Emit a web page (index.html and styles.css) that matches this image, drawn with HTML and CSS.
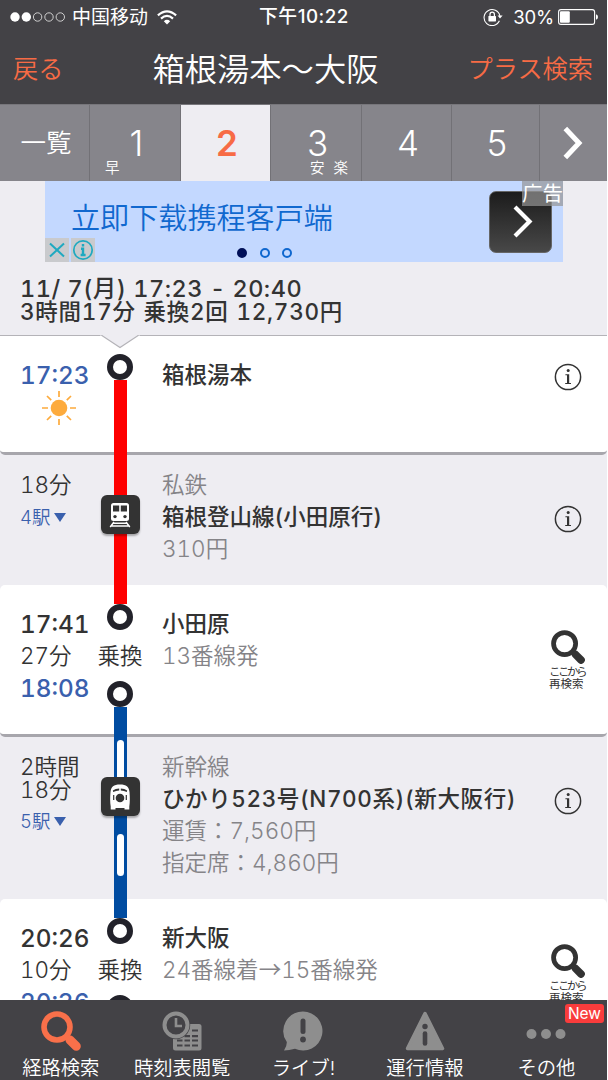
FILE: index.html
```
<!DOCTYPE html>
<html lang="ja">
<head>
    <meta charset="UTF-8">
    <meta name="viewport" content="width=device-width, initial-scale=1.0">
    <title>箱根湯本〜大阪</title>
    <link rel="stylesheet" href="styles.css">
</head>
<body>
    <!-- shared icons -->
    <svg class="defs" width="0" height="0">
        <symbol id="icon-search" viewBox="0 0 40 40">
            <circle cx="16" cy="16" r="13" fill="none" stroke="currentColor" stroke-width="5.6"/>
            <path d="M24.5 24.5L29 29" stroke="currentColor" stroke-width="5"/>
            <path d="M29 29L35.3 35.3" stroke="currentColor" stroke-width="9" stroke-linecap="round"/>
        </symbol>
        <symbol id="icon-info" viewBox="0 0 28 28">
            <circle cx="14" cy="14" r="12.6" fill="none" stroke="currentColor" stroke-width="1.5"/>
            <circle cx="14.2" cy="7.6" r="1.5" fill="currentColor"/>
            <path d="M11.4 11.3H15.2V20H17V21H11.2V20H13V12.3H11.4Z" fill="currentColor"/>
        </symbol>
    </svg>

    <div class="app">
        <div class="status-bar">
            <div class="carrier">
                <svg width="56" height="12" viewBox="0 0 56 12">
                    <g fill="#fff"><circle cx="5" cy="6" r="4.7"/><circle cx="16.3" cy="6" r="4.7"/></g>
                    <g fill="none" stroke="#ddd" stroke-width="0.9"><circle cx="27.6" cy="6" r="4.2"/><circle cx="39" cy="6" r="4.2"/><circle cx="50.3" cy="6" r="4.2"/></g>
                </svg>
                <span class="zh">中国移动</span>
                <svg class="wifi" width="20" height="15" viewBox="0 0 20 15">
                    <g fill="none" stroke="#fff" stroke-width="2.2"><path d="M0.9 5.4Q10 -2.8 19.1 5.4"/><path d="M4 8.6Q10 3.2 16 8.6"/></g>
                    <path d="M6.8 11.2Q10 8.4 13.2 11.2L10 14.6Z" fill="#fff"/>
                </svg>
            </div>
            <div class="clock zh">下午10:22</div>
            <div class="battery">
                <svg width="20" height="18" viewBox="0 0 20 18">
                    <path d="M16.4 12.8A8 8 0 1 1 16.9 8" fill="none" stroke="#fff" stroke-width="1.1"/>
                    <path d="M14.6 7.4H19.6L17 10.6Z" fill="#fff"/>
                    <rect x="5.4" y="8" width="7.6" height="5.4" rx=".6" fill="#fff"/>
                    <path d="M7 8.4V6.4a2.2 2.2 0 0 1 4.4 0V8.4" fill="none" stroke="#fff" stroke-width="1.2"/>
                </svg>
                <span class="percent">30%</span>
                <svg width="40" height="16" viewBox="0 0 40 16">
                    <rect x=".6" y=".6" width="36" height="14.8" rx="2.4" fill="none" stroke="#fff" stroke-width="1.1"/>
                    <rect x="2" y="2.2" width="9.8" height="11.6" rx="1" fill="#fff"/>
                    <path d="M38 5.2Q40 6 40 8T38 10.8Z" fill="#fff"/>
                </svg>
            </div>
        </div>

        <div class="nav-bar">
            <a class="nav-link">戻る</a>
            <h1>箱根湯本〜大阪</h1>
            <a class="nav-link">プラス検索</a>
        </div>

        <div class="tabs">
            <div class="tab tab-list">一覧</div>
            <div class="tab">1<span class="mark">早</span></div>
            <div class="tab active">2</div>
            <div class="tab">3<span class="mark mark-right">安 楽</span></div>
            <div class="tab">4</div>
            <div class="tab">5</div>
            <div class="tab tab-next">
                <svg width="20" height="34" viewBox="0 0 20 34"><path d="M2.3 2.5L16 17L2.3 31.5" fill="none" stroke="#fff" stroke-width="5"/></svg>
            </div>
        </div>

        <div class="ad">
            <span class="ad-text zh">立即下载携程客户端</span>
            <div class="ad-controls">
                <svg width="24" height="24" viewBox="0 0 24 24"><path d="M5 5.5L19 18.5M19 5.5L5 18.5" stroke="#1fa9c0" stroke-width="2"/></svg>
                <svg width="24" height="24" viewBox="0 0 24 24"><circle cx="12" cy="12" r="9.2" fill="none" stroke="#1fa9c0" stroke-width="1.7"/><path d="M12 6V8.6M10 10.8H12V17M9.6 17H14.6" fill="none" stroke="#1fa9c0" stroke-width="2.4"/></svg>
            </div>
            <div class="ad-dots"><i class="on"></i><i></i><i></i></div>
            <div class="ad-go">
                <svg width="20" height="34" viewBox="0 0 20 34"><path d="M2 2L16.5 16.5L2 31" fill="none" stroke="#fff" stroke-width="4.2"/></svg>
            </div>
            <span class="ad-label zh">广告</span>
        </div>

        <div class="summary">
            <p class="s-time">11/ 7(月) 17:23 - 20:40</p>
            <p class="s-fare">3時間17分 乗換2回 12,730円</p>
        </div>

        <div class="route">
            <div class="row station first">
                <svg class="notch" width="40" height="14" viewBox="0 0 40 14"><path d="M0 0H40V.5H38L20 12.5L2 .5H0Z" fill="#eeedf2"/><path d="M1.5 .3L20 12.5L38.5 .3" fill="none" stroke="#b4b3b8" stroke-width="1.2"/></svg>
                <div class="times">
                    <span class="time dep">17:23</span>
                    <svg class="sun" width="34" height="34" viewBox="0 0 34 34">
                        <circle cx="17" cy="17" r="8.3" fill="#fdab3d"/>
                        <path d="M17 0V6M17 28V34M0 17H6M28 17H34M5 5L9.2 9.2M24.8 24.8L29 29M29 5L24.8 9.2M9.2 24.8L5 29" stroke="#fdab3d" stroke-width="1.7"/>
                    </svg>
                </div>
                <div class="rail red"><span class="node"></span><span class="line"></span></div>
                <div class="info"><p class="name">箱根湯本</p></div>
                <div class="action"><svg class="i-info" width="28" height="28"><use href="#icon-info"/></svg></div>
            </div>

            <div class="row leg leg1">
                <div class="times"><span>18分</span><span class="stops">4駅<i></i></span></div>
                <div class="rail red">
                    <span class="line"></span>
                    <span class="vehicle">
                        <svg width="22" height="26" viewBox="0 0 22 26">
                            <rect x="2" y="1" width="18" height="18" rx="2.5" fill="#fff"/>
                            <g fill="#333"><rect x="4" y="3.5" width="6.2" height="6"/><rect x="11.8" y="3.5" width="6.2" height="6"/><circle cx="6" cy="14.6" r="1.7"/><circle cx="16" cy="14.6" r="1.7"/></g>
                            <path d="M5 20L1.2 25M17 20L20.8 25M4.5 21.3H17.5M2.6 24H19.4" fill="none" stroke="#fff" stroke-width="1.5"/>
                        </svg>
                    </span>
                    <span class="line"></span>
                </div>
                <div class="info"><p>私鉄</p><p class="name">箱根登山線(小田原行)</p><p>310円</p></div>
                <div class="action"><svg class="i-info" width="28" height="28"><use href="#icon-info"/></svg></div>
            </div>

            <div class="row station transfer">
                <div class="times"><span class="time">17:41</span><span>27分</span><span class="time dep">18:08</span></div>
                <div class="rail">
                    <span class="line stub red"></span><span class="node"></span>
                    <span class="change">乗換</span>
                    <span class="node"></span><span class="line blue"></span>
                </div>
                <div class="info"><p class="name">小田原</p><p>13番線発</p></div>
                <div class="action research"><svg width="34" height="34"><use href="#icon-search"/></svg><span>ここから</span><span>再検索</span></div>
            </div>

            <div class="row leg leg2">
                <div class="times"><span class="long">2時間<br>18分</span><span class="stops">5駅<i></i></span></div>
                <div class="rail blue">
                    <span class="line top"><b></b></span>
                    <span class="vehicle">
                        <svg width="22" height="26" viewBox="0 0 22 26">
                            <path d="M11 .5C17.5 .5 19.8 2.5 20.5 8C21 14 21 18 20.3 22.5V25.5H15.5V24H6.5V25.5H1.7V22.5C1 18 1 14 1.5 8C2.2 2.5 4.5 .5 11 .5Z" fill="#fff"/>
                            <path d="M3.8 6.6Q6.5 4.6 10.2 4.6V6.4Q7 6.4 4.2 8ZM18.200 6.600Q15.500 4.600 11.800 4.600V6.400Q15 6.400 17.800 8Z" fill="#333"/>
                            <circle cx="11" cy="14" r="4.3" fill="#333"/>
                            <path d="M4.700 11V16M17.300 11V16" stroke="#333" stroke-width="1.2"/>
                        </svg>
                    </span>
                    <span class="line bottom"><b></b></span>
                </div>
                <div class="info"><p>新幹線</p><p class="name hikari">ひかり523号(N700系)(新大阪行)</p><p>運賃：7,560円</p><p>指定席：4,860円</p></div>
                <div class="action"><svg class="i-info" width="28" height="28"><use href="#icon-info"/></svg></div>
            </div>

            <div class="row station transfer">
                <div class="times"><span class="time">20:26</span><span>10分</span><span class="time dep">20:36</span></div>
                <div class="rail">
                    <span class="line stub blue"></span><span class="node"></span>
                    <span class="change">乗換</span>
                    <span class="node"></span><span class="line blue"></span>
                </div>
                <div class="info"><p class="name">新大阪</p><p>24番線着<span class="arrow">→</span>15番線発</p></div>
                <div class="action research"><svg width="34" height="34"><use href="#icon-search"/></svg><span>ここから</span><span>再検索</span></div>
            </div>
        </div>

        <div class="tab-bar">
            <div class="item active">
                <svg width="40" height="40"><use href="#icon-search"/></svg>
                <span>経路検索</span>
            </div>
            <div class="item">
                <svg width="40" height="40" viewBox="0 0 40 40">
                    <rect x="11" y="13" width="28.5" height="26.5" rx="2.5" fill="#8e8e8e"/>
                    <path d="M30 19.5H36M30 25.2H36M22.5 25.2H28M15 29.5H20.5M22.5 29.5H28M30 29.5H36M15 34.5H20.5M22.5 34.5H28M30 34.5H36" stroke="#434246" stroke-width="2.2"/>
                    <circle cx="14" cy="14" r="14.2" fill="#434246"/>
                    <circle cx="14" cy="14" r="11.5" fill="#434246" stroke="#8e8e8e" stroke-width="4"/>
                    <path d="M14 7V15H20" fill="none" stroke="#8e8e8e" stroke-width="2.6"/>
                </svg>
                <span>時刻表閲覧</span>
            </div>
            <div class="item">
                <svg width="40" height="40" viewBox="0 0 40 40">
                    <path d="M20 .5A19.5 19.5 0 1 1 12 37.8Q6 39.5 1 39.5Q4 35 3.8 31A19.5 19.5 0 0 1 20 .5Z" fill="#8e8e8e"/>
                    <path d="M20 10V20.5" stroke="#434246" stroke-width="5" stroke-linecap="round"/><circle cx="20" cy="28.5" r="2.9" fill="#434246"/>
                </svg>
                <span>ライブ!</span>
            </div>
            <div class="item">
                <svg width="40" height="40" viewBox="0 0 40 40">
                    <path d="M20 2.5L37.5 37.5H2.5Z" fill="#8e8e8e" stroke="#8e8e8e" stroke-width="3.5" stroke-linejoin="round"/>
                    <circle cx="20" cy="15.5" r="2.7" fill="#434246"/><path d="M20 22.5V32.5" stroke="#434246" stroke-width="4.6" stroke-linecap="round"/>
                </svg>
                <span>運行情報</span>
            </div>
            <div class="item">
                <em class="badge">New</em>
                <svg width="40" height="40" viewBox="0 0 40 40"><g fill="#8e8e8e"><circle cx="5.5" cy="23" r="5"/><circle cx="20" cy="23" r="5"/><circle cx="34.5" cy="23" r="5"/></g></svg>
                <span>その他</span>
            </div>
        </div>
    </div>
</body>
</html>
```
FILE: styles.css
```
* {
    margin: 0;
    padding: 0;
    box-sizing: border-box;
}

body {
    font-family: Inter, "Noto Sans CJK JP", sans-serif;
    font-weight: 350;
    color: #333;
    background: #fff;
}

.defs {
    position: absolute;
}

svg {
    display: block;
}

.zh {
    font-family: Inter, "Noto Sans CJK SC", sans-serif;
}

.app {
    width: 607px;
    height: 1080px;
    overflow: hidden;
    display: flex;
    flex-direction: column;
    background: #eeedf2;
}

/* header */
.status-bar {
    height: 34px;
    flex: none;
    display: grid;
    grid-template-columns: 1fr auto 1fr;
    align-items: center;
    padding: 0 9px 0 10px;
    background: #434246;
    color: #fff;
    font-size: 19px;
    line-height: 34px;
    font-weight: 400;
}

.carrier,
.battery {
    display: flex;
    align-items: center;
}

.carrier .zh {
    margin: 0 9px 0 6px;
    padding-top: 1px;
    line-height: 33px;
}

.clock {
    font-size: 18.8px;
    font-weight: 500;
    letter-spacing: 0.5px;
}

.battery {
    justify-content: flex-end;
}

.percent {
    margin: 0 4px 0 10px;
    font-size: 18.5px;
    letter-spacing: -0.2px;
}

.nav-bar {
    height: 70px;
    flex: none;
    display: flex;
    justify-content: space-between;
    align-items: center;
    padding: 0 14px 4px 13px;
    background: #434246;
}

.nav-bar h1 {
    color: #fff;
    font-size: 32.3px;
    font-weight: 350;
}

.nav-link {
    color: #f76b45;
    font-size: 25.2px;
}

.tabs {
    height: 77px;
    flex: none;
    display: grid;
    grid-template-columns: 90px 91px 90px 91px 90px 88px 65px;
    background: #86858b;
    color: #fff;
    border-top: 1px solid #77767b;
}

.tab {
    position: relative;
    display: flex;
    align-items: center;
    justify-content: center;
    padding-left: 3px;
    border-right: 1px solid #727176;
    font-size: 35px;
    font-weight: 300;
}

.tab-list {
    font-size: 25.5px;
    padding-bottom: 6px;
    font-weight: 350;
}

.tab.active {
    background: #eeedf2;
    color: #f76b45;
    font-weight: 600;
}

.tab-next {
    border-right: none;
    padding-left: 0;
}

.mark {
    position: absolute;
    left: 15px;
    bottom: 3px;
    font-size: 14.5px;
    font-weight: 350;
    line-height: 20px;
}

.mark-right {
    left: auto;
    right: 13px;
    word-spacing: 5px;
}

/* ad banner */
.ad {
    position: relative;
    width: 518px;
    height: 81px;
    flex: none;
    margin-left: 45px;
    background: #c3d8ff;
}

.ad-text {
    display: block;
    padding: 17px 0 0 26px;
    color: #1068cf;
    font-size: 29.1px;
    line-height: 42px;
}

.ad-controls {
    position: absolute;
    left: 0;
    bottom: 0;
    display: flex;
    gap: 2px;
}

.ad-controls svg {
    background: #c9cacd;
}

.ad-dots {
    position: absolute;
    left: 192px;
    bottom: 4px;
    display: flex;
    gap: 12.5px;
}

.ad-dots i {
    width: 10px;
    height: 10px;
    border: 2px solid #1068cf;
    border-radius: 50%;
}

.ad-dots .on {
    background: #001058;
    border-color: #001058;
}

.ad-go {
    position: absolute;
    left: 444px;
    top: 10px;
    width: 63px;
    height: 62px;
    display: flex;
    align-items: center;
    justify-content: center;
    padding-left: 4px;
    background: linear-gradient(#1c1c1c, #484848);
    border: 1px solid #666;
    border-radius: 7px;
}

.ad-label {
    position: absolute;
    right: 0;
    top: 0;
    width: 41px;
    height: 25px;
    background: rgba(150, 150, 150, 0.7);
    color: #fff;
    font-size: 20.5px;
    line-height: 25px;
    font-weight: 400;
}

.summary {
    height: 73px;
    flex: none;
    padding: 15px 20px 0;
    font-size: 22.5px;
    font-weight: 500;
    line-height: 23px;
    white-space: nowrap;
    font-variant-numeric: tabular-nums;
}

.s-time {
    font-size: 23.5px;
    letter-spacing: 0.5px;
}

.s-fare {
    letter-spacing: 0.75px;
    word-spacing: 1px;
}

/* route */
.route {
    flex: 1;
    min-height: 0;
    overflow: hidden;
}

.row {
    position: relative;
    display: grid;
    grid-template-columns: 98px 44px 1fr 78px;
    font-size: 22.5px;
    line-height: 32px;
    white-space: nowrap;
    font-variant-numeric: tabular-nums;
}

.station {
    background: #fff;
    border-bottom: 3px solid #a7a6ac;
    border-radius: 5px;
    padding-top: 23px;
}

.first {
    height: 120px;
    border-top: 1px solid #b4b3b8;
    border-radius: 0 0 5px 5px;
}

.leg1 {
    height: 130px;
    padding-top: 14px;
}

.transfer {
    height: 152px;
    padding-top: 23px;
}

.leg2 {
    height: 162px;
    padding-top: 14px;
}

.notch {
    position: absolute;
    left: 100px;
    top: -1px;
}

.times {
    display: flex;
    flex-direction: column;
    padding-left: 20px;
}

.time {
    font-size: 24.3px;
    font-weight: 500;
}

.dep,
.stops {
    color: #3a60ad;
}

.stops {
    font-size: 18.5px;
    display: flex;
    align-items: center;
    gap: 4px;
}

.stops i {
    border: 6.5px solid transparent;
    border-top: 9px solid #3a60ad;
    border-bottom: none;
}

.long {
    line-height: 23px;
    padding-top: 4px;
    margin-bottom: 4px;
}

.sun {
    margin-left: 22px;
}

.info {
    padding-left: 20px;
    color: #858488;
}

.name {
    color: #333;
    font-weight: 500;
}

.hikari {
    letter-spacing: 0.6px;
}

.arrow {
    font-family: "Noto Sans CJK JP", sans-serif;
    line-height: 1;
}

.rail {
    display: flex;
    flex-direction: column;
    align-items: center;
    z-index: 1;
}

.station .rail {
    margin: -23px 0 -3px;
}

.first .rail {
    padding-top: 18px;
}

.leg .rail {
    margin-top: -14px;
}

.line {
    flex: 1;
    width: 13px;
}

.red .line,
.line.red {
    background: #fe0000;
}

.blue .line,
.line.blue {
    background: #004ca1;
}

.line.stub {
    flex: none;
    height: 19px;
}

.line b {
    display: block;
    width: 7px;
    height: 42px;
    margin: 0 auto;
    border-radius: 3.5px;
    background: #fff;
}

.line.top b {
    margin-top: 3px;
}

.line.bottom b {
    margin-top: 18px;
}

.node {
    flex: none;
    width: 26px;
    height: 26px;
    border: 6.5px solid #22222a;
    border-radius: 50%;
    background: #fff;
}

.change {
    padding: 9px 0;
}

.transfer .change {
    line-height: 33px;
}

.vehicle {
    flex: none;
    width: 39px;
    height: 39px;
    display: flex;
    align-items: center;
    justify-content: center;
    background: #333;
    border-radius: 6px;
    box-shadow: 0 2px 2px rgba(0, 0, 0, 0.3);
    z-index: 1;
}

.leg1 .line:first-child,
.leg2 .line.top {
    flex: none;
    height: 40px;
}

.action {
    padding-left: 25px;
}

.first .i-info {
    margin-top: 4px;
}

.leg .i-info {
    margin-top: 36px;
}

.research {
    padding: 22px 0 0 20px;
    display: flex;
    flex-direction: column;
    align-items: flex-start;
    font-size: 11.5px;
    font-weight: 400;
    line-height: 11.5px;
}

.research svg {
    margin: 0 0 3px 2px;
}

.research span:nth-of-type(1) {
    letter-spacing: -2.5px;
}

/* bottom bar */
.tab-bar {
    height: 80px;
    flex: none;
    display: grid;
    grid-template-columns: repeat(5, 1fr);
    background: #434246;
    color: #fff;
    z-index: 2;
}

.item {
    position: relative;
    display: flex;
    flex-direction: column;
    align-items: center;
    padding-top: 11px;
    font-size: 19.3px;
    line-height: 34px;
}

.item.active svg {
    color: #f9704a;
}

.badge {
    position: absolute;
    right: 3px;
    top: 4px;
    width: 39px;
    height: 19px;
    background: #f93c3c;
    border-radius: 3px;
    font-size: 15.5px;
    font-style: normal;
    font-weight: 400;
    line-height: 19px;
    text-align: center;
}
```
